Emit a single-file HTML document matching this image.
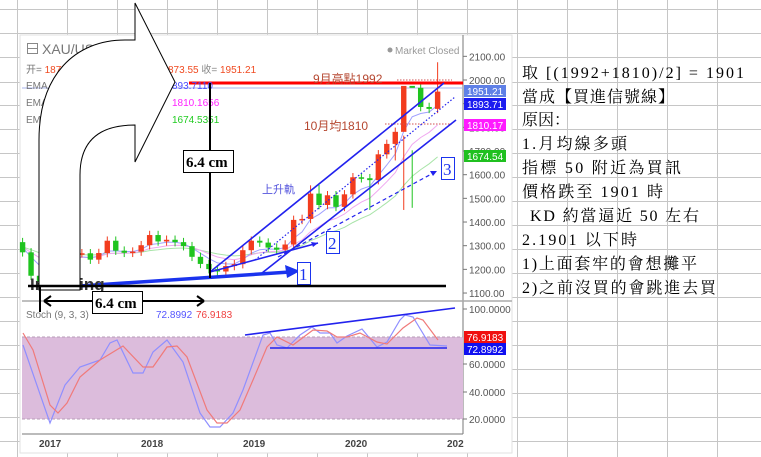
<!DOCTYPE html>
<html><head><meta charset="utf-8"><style>
html,body{margin:0;padding:0;background:#fff;width:761px;height:457px;overflow:hidden}
svg{display:block}
.s{font-family:"Liberation Sans","Noto Sans CJK TC",sans-serif}
.m{font-family:"Liberation Serif","Noto Serif CJK SC",serif}
</style></head><body>
<svg id="v" width="761" height="457" viewBox="0 0 761 457" xmlns="http://www.w3.org/2000/svg">
<g id="grid" stroke="#c6c6c6" stroke-width="1"></g>
<rect x="20" y="35" width="492" height="418" fill="#fff" stroke="#e2e2e2"/>
<line x1="463" y1="35" x2="463" y2="434" stroke="#777"/>
<line x1="22" y1="434" x2="463" y2="434" stroke="#777"/>
<line x1="22" y1="301" x2="512" y2="301" stroke="#aaa" stroke-width="1.5"/>
<rect x="22" y="337" width="441" height="82" fill="#dcbcdc"/>
<line x1="22" y1="337" x2="463" y2="337" stroke="#b79bb7" stroke-dasharray="3,2"/>
<line x1="22" y1="419" x2="463" y2="419" stroke="#b79bb7" stroke-dasharray="3,2"/>
<line x1="22" y1="88" x2="463" y2="88" stroke="#aab4ee"/>
<g id="ax" class="s" font-size="10" fill="#555"></g>
<g class="s" font-size="10" font-weight="bold" fill="#444">
<text x="39" y="447">2017</text><text x="141" y="447">2018</text><text x="243" y="447">2019</text><text x="345" y="447">2020</text><text x="447" y="447">202</text>
</g>
<g id="ema"></g>
<g id="cdl"></g>
<polyline fill="none" stroke="#8f8fff" stroke-width="1.2" points="23,345 50,423 65,385 80,367 100,360 110,343 117,340 133,373 143,373 153,352 167,340 183,362 200,413 210,427 220,427 233,413 243,390 263,335 270,333 277,345 287,348 300,335 312,327 320,333 330,333 337,343 347,336 362,329 377,347 387,342 400,320 405,315 413,317 430,345 447,346"/>
<polyline fill="none" stroke="#f07a7a" stroke-width="1.2" points="23,333 33,350 50,405 58,413 67,403 80,377 100,360 123,346 143,367 153,367 167,347 177,346 187,357 207,410 217,423 227,423 240,410 253,380 267,347 277,337 293,345 313,330 327,331 337,337 347,337 360,333 377,342 387,344 403,328 417,318 423,320 438,340"/>
<line x1="245" y1="335" x2="455" y2="308" stroke="#2222ee" stroke-width="1.6"/>
<line x1="270" y1="348" x2="447" y2="348" stroke="#2222ee" stroke-width="1.6"/>
<line x1="397" y1="80" x2="452" y2="80" stroke="#d05050" stroke-dasharray="1.5,1.5"/>
<line x1="385" y1="124" x2="452" y2="124" stroke="#d05050" stroke-dasharray="1.5,1.5"/>
<line x1="189" y1="83" x2="463" y2="83" stroke="#f00" stroke-width="3"/>
<text x="313" y="83" class="s" font-size="12" fill="#b5462f">9月高點1992</text>
<text x="304" y="130" class="s" font-size="12" fill="#b5462f">10月均1810</text>
<text x="262" y="193" class="s" font-size="11" fill="#5555dd">上升軌</text>
<g stroke="#2222ee" stroke-width="1.6" fill="none">
<line x1="210" y1="272" x2="444" y2="83"/>
<line x1="262" y1="273" x2="456" y2="120"/>
<line x1="210" y1="272" x2="318" y2="243"/>
<line x1="255" y1="260" x2="455" y2="97" stroke-dasharray="1.5,2" stroke-width="1.2"/>
<line x1="278" y1="257" x2="437" y2="171" stroke-dasharray="4,3" stroke-width="1.2"/>
</g>
<path d="M318,243 l-7,-1 l2,5z M437,171 l-7,0 l3,5z" fill="#2222ee"/>
<path d="M80,286 L290,272" stroke="#1a33ee" stroke-width="3.5" fill="none"/>
<path d="M300,271 L285,265 L287,278 Z" fill="#1a33ee"/>
<g fill="#fff" stroke="#1a33ee" stroke-width="1">
<rect x="297.5" y="262.5" width="13" height="22"/><rect x="326.5" y="231.5" width="13" height="22"/><rect x="441.5" y="157.5" width="13" height="22"/>
</g>
<g class="m" font-size="17" fill="#1a33ee"><text x="299" y="280">1</text><text x="328" y="249">2</text><text x="443" y="175">3</text></g>
<g class="s" font-size="10">
<rect x="464" y="85" width="42" height="12" fill="#5f80e6"/><text x="467" y="95" fill="#fff">1951.21</text>
<rect x="464" y="98" width="42" height="12" fill="#1c1cf0"/><text x="467" y="108" fill="#fff">1893.71</text>
<rect x="464" y="119" width="42" height="12" fill="#ff1aff"/><text x="467" y="129" fill="#fff">1810.17</text>
<rect x="464" y="150" width="42" height="12" fill="#20c020"/><text x="467" y="160" fill="#fff">1674.54</text>
<rect x="464" y="331" width="42" height="12" fill="#f01010"/><text x="467" y="341" fill="#fff">76.9183</text>
<rect x="464" y="343" width="42" height="12" fill="#1010f0"/><text x="467" y="353" fill="#fff">72.8992</text>
<circle cx="390" cy="50" r="2.5" fill="#999"/><text x="395" y="54" fill="#999">Market Closed</text>
</g>
<g class="s" font-size="10" fill="#777">
<rect x="27.5" y="43.5" width="10" height="10" fill="none" stroke="#888"/><line x1="27" y1="48.5" x2="38" y2="48.5" stroke="#888"/>
<text x="42" y="54" font-size="14">XAU/US</text>
<text x="26" y="73">开= <tspan fill="#f04a20">1877</tspan></text>
<text x="26" y="89">EMA (5</text><text x="26" y="106">EMA (</text><text x="26" y="123">EMA</text>
<text x="168" y="73" fill="#f04a20">873.55 <tspan fill="#888">收=</tspan> 1951.21</text>
<text x="172" y="89" fill="#4a4aff">893.7110</text>
<text x="172" y="106" fill="#ff22ff">1810.1656</text>
<text x="172" y="123" fill="#22cc22">1674.5351</text>
<text x="26" y="318">Stoch (9, 3, 3)</text>
<text x="156" y="318" fill="#5555ff">72.8992</text>
<text x="196" y="318" fill="#f04040">76.9183</text>
</g>
<text x="30" y="290" class="s" font-size="17" font-weight="bold" fill="#333">Investing</text>
<path d="M39,290 L39,140 C39,75 75,40 125,40 L135,40 L135,3 L175,82 L135,162 L135,125 C100,125 80,140 80,175 L80,290 Z" fill="#fff" stroke="#000" stroke-width="1"/>
<line x1="210" y1="83" x2="210" y2="278" stroke="#000" stroke-width="2"/>
<line x1="28" y1="286" x2="446" y2="286" stroke="#000" stroke-width="2.5"/>
<line x1="40" y1="286" x2="40" y2="312" stroke="#000" stroke-width="2"/>
<line x1="45" y1="301" x2="203" y2="301" stroke="#000" stroke-width="2"/>
<path d="M44,301 l7,-5 M44,301 l7,5 M204,301 l-7,-5 M204,301 l-7,5" stroke="#000" stroke-width="2"/>
<rect x="183.5" y="150.5" width="50" height="22" fill="#fff" stroke="#000"/>
<text x="186" y="167" class="m" font-size="15" font-weight="bold">6.4 cm</text>
<rect x="92.5" y="291.5" width="50" height="22" fill="#fff" stroke="#000"/>
<text x="95" y="308" class="m" font-size="15" font-weight="bold">6.4 cm</text>
<g class="m" font-size="16" fill="#000" lengthAdjust="spacing">
<text x="522" y="78" textLength="222" lengthAdjust="spacing">取 [(1992+1810)/2] = 1901</text>
<text x="522" y="102" textLength="152" lengthAdjust="spacing">當成【買進信號線】</text>
<text x="522" y="125" textLength="48" lengthAdjust="spacing">原因：</text>
<text x="522" y="149" textLength="105" lengthAdjust="spacing">1.月均線多頭</text>
<text x="522" y="173" textLength="159" lengthAdjust="spacing">指標 50 附近為買訊</text>
<text x="522" y="197" textLength="141" lengthAdjust="spacing">價格跌至 1901 時</text>
<text x="530" y="221" textLength="169" lengthAdjust="spacing">KD 約當逼近 50 左右</text>
<text x="522" y="245" textLength="115" lengthAdjust="spacing">2.1901 以下時</text>
<text x="522" y="269" textLength="175" lengthAdjust="spacing">1)上面套牢的會想攤平</text>
<text x="522" y="293" textLength="194" lengthAdjust="spacing">2)之前沒買的會跳進去買</text>
</g>
</svg>
<script>
var NS="http://www.w3.org/2000/svg";
function el(p,t,a){var e=document.createElementNS(NS,t);for(var k in a)e.setAttribute(k,a[k]);p.appendChild(e);return e;}
var g=document.getElementById('grid');
[17,67,117,167,217,267,317,367,417,467,517,567,617,667,717].forEach(function(x){el(g,'line',{x1:x+.5,y1:0,x2:x+.5,y2:457});});
[9,33,57,82,105,129,153,177,201,225,249,273,297,321,345,369,393,417,441].forEach(function(y){el(g,'line',{x1:0,y1:y+.5,x2:761,y2:y+.5});});
var ax=document.getElementById('ax');
var Y=function(p){return 80+(2000-p)*0.2367;};
for(var p=1100;p<=2100;p+=100){var yy=Y(p);el(ax,'line',{x1:463,y1:yy,x2:467,y2:yy,stroke:'#777'});var t=el(ax,'text',{x:469,y:yy+4});t.textContent=p+'.00';}
[[309,'100.0000'],[364,'60.0000'],[392,'40.0000'],[419,'20.0000']].forEach(function(a){el(ax,'line',{x1:463,y1:a[0],x2:467,y2:a[0],stroke:'#777'});var t=el(ax,'text',{x:469,y:a[0]+4});t.textContent=a[1];});
var C=[1315,1272,1173,1146,1210,1248,1249,1268,1268,1241,1269,1321,1279,1270,1275,1302,1345,1318,1325,1315,1298,1253,1223,1201,1191,1214,1222,1281,1321,1313,1292,1283,1305,1409,1413,1520,1472,1513,1464,1517,1589,1585,1577,1686,1730,1781,1975,1967,1886,1878,1951];
var H={46:2075,43:1703,31:1555,32:1557,42:1765,35:1535},L={38:1451,42:1451,41:1660,43:1460};
var X=function(m){return 48+m*8.47;};
var cd=document.getElementById('cdl'),eg=document.getElementById('ema');
function ema(n,col){var k=2/(n+1),e=C[0]-20,pts=[];for(var i=0;i<C.length;i++){e=C[i]*k+e*(1-k);var m=i-4;if(m>=-3)pts.push(X(m).toFixed(1)+','+Y(e).toFixed(1));}el(eg,'polyline',{points:pts.join(' '),fill:'none',stroke:col,'stroke-width':1});}
ema(20,'#a8e4a8');ema(10,'#f0a8f0');ema(5,'#a0a0ff');
for(var i=1;i<C.length;i++){var m=i-4;if(m<-3)continue;var o=C[i-1],c=C[i],x=X(m);var hi=H[m]||Math.max(o,c)+18,lo=L[m]||Math.min(o,c)-18;var col=c>=o?'#f23c1e':'#1fc41f';
el(cd,'line',{x1:x,y1:Y(hi),x2:x,y2:Y(lo),stroke:col,'stroke-width':1});
var t=Y(Math.max(o,c)),b=Y(Math.min(o,c));el(cd,'rect',{x:x-2.7,y:t,width:5.4,height:Math.max(1.5,b-t),fill:col});}
</script>
</body></html>
